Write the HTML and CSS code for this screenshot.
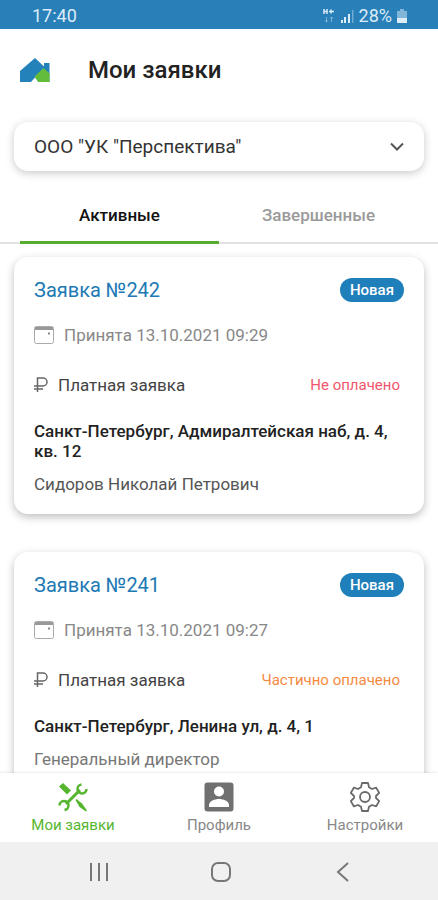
FILE: index.html
```html
<!DOCTYPE html>
<html lang="ru">
<head>
<meta charset="utf-8">
<meta name="viewport" content="width=device-width, initial-scale=1">
<title>Мои заявки</title>
<link rel="stylesheet" href="styles.css">
</head>
<body>
<div class="app">
  <div class="status-bar">
    <span>17:40</span>
    <div class="status-icons">
      <svg width="12" height="16" viewBox="0 0 12 16" fill="none" stroke="currentColor"><path d="M1 1v5M4 1v5M1 3.500h3M6 3.500h5M8 1.500v4" stroke-width="1.500"/><path d="M3.500 9v5M2 12.500l1.500 1.500L5 12.500M8.500 14V9M7 10.500L8.500 9l1.500 1.500" opacity=".45"/></svg>
      <svg width="14" height="14" viewBox="0 0 14 14" fill="currentColor"><path d="M1 11h2v3H1zM4 8h2v6H4zM8 5h2v9H8z"/><path d="M12 1h1.500v13H12z" opacity=".4"/></svg>
      <span>28%</span>
      <svg width="10" height="16" viewBox="0 0 10 16" fill="currentColor"><path d="M3 1h4v2h3v12H0V3h3z" opacity=".5"/><path d="M0 10h10v4a1 1 0 0 1-1 1H1a1 1 0 0 1-1-1z"/></svg>
    </div>
  </div>

  <header class="header">
    <svg class="logo" width="30" height="26" viewBox="0 0 30 26"><path fill="#2482bb" d="M0 25V14L15 1l9 8.500V6h5.500v19H0z"/><path fill="#64bd3a" d="M14.500 19.500L23.500 11l6 5.500V25H18z"/><path fill="#fff" d="M10.500 25.500l4.500-5 3.500 5z"/></svg>
    <h1 class="title">Мои заявки</h1>
  </header>

  <div class="company">
    <select class="company-select" aria-label="Управляющая компания">
      <option>ООО "УК "Перспектива"</option>
    </select>
    <svg class="chevron" width="16" height="10" viewBox="0 0 16 10" fill="none" stroke="#555" stroke-width="2"><path d="M2 1.500l6 6 6-6"/></svg>
  </div>

  <div class="tabs" role="tablist">
    <button class="tab tab-active" role="tab" aria-selected="true">Активные</button>
    <button class="tab" role="tab" aria-selected="false">Завершенные</button>
  </div>

  <main class="list">
    <article class="card">
      <div class="row">
        <h2 class="card-title">Заявка №242</h2>
        <span class="badge">Новая</span>
      </div>
      <div class="date">
        <svg width="20" height="20" viewBox="0 0 20 20" fill="none" stroke="#aaa"><rect x=".5" y="1.500" width="19" height="17" rx="2"/><path d="M1 3.500h18" stroke="#999" stroke-width="3"/><path d="M14 8.500h2" stroke="#888" stroke-width="2"/></svg>
        <span>Принята 13.10.2021 09:29</span>
      </div>
      <div class="row payment">
        <span class="paid">
          <svg width="14" height="16" viewBox="0 0 14 16" fill="none" stroke="#666" stroke-width="1.500"><path d="M3.500 15V1H9a4 4 0 0 1 0 8H0M0 12h9"/></svg>
          Платная заявка
        </span>
        <span class="state state-unpaid">Не оплачено</span>
      </div>
      <p class="address">Санкт-Петербург, Адмиралтейская наб, д. 4, кв. 12</p>
      <p class="person">Сидоров Николай Петрович</p>
    </article>

    <article class="card">
      <div class="row">
        <h2 class="card-title">Заявка №241</h2>
        <span class="badge">Новая</span>
      </div>
      <div class="date">
        <svg width="20" height="20" viewBox="0 0 20 20" fill="none" stroke="#aaa"><rect x=".5" y="1.500" width="19" height="17" rx="2"/><path d="M1 3.500h18" stroke="#999" stroke-width="3"/><path d="M14 8.500h2" stroke="#888" stroke-width="2"/></svg>
        <span>Принята 13.10.2021 09:27</span>
      </div>
      <div class="row payment">
        <span class="paid">
          <svg width="14" height="16" viewBox="0 0 14 16" fill="none" stroke="#666" stroke-width="1.500"><path d="M3.500 15V1H9a4 4 0 0 1 0 8H0M0 12h9"/></svg>
          Платная заявка
        </span>
        <span class="state state-partial">Частично оплачено</span>
      </div>
      <p class="address">Санкт-Петербург, Ленина ул, д. 4, 1</p>
      <p class="person person-muted">Генеральный директор</p>
    </article>
  </main>

  <nav class="nav">
    <a class="nav-item nav-active" href="#requests">
      <svg width="30" height="30" viewBox="0 0 30 30" fill="currentColor"><path d="M1 4.500L5 1l8 7.500L9 12.500z"/><path d="M17.500 18l1-1 5.500 4.500 5 7-1 1-6.500-4.500z"/><path d="M8 22L22 8" stroke="currentColor" stroke-width="3"/><path d="M23.500 2.500A4.500 4.500 0 1 0 28.500 7M6.500 28A4.500 4.500 0 1 0 1.500 23.500" fill="none" stroke="currentColor" stroke-width="2.500"/></svg>
      Мои заявки
    </a>
    <a class="nav-item" href="#profile">
      <svg width="30" height="30" viewBox="0 0 30 30"><rect x=".5" y=".5" width="29" height="29" rx="3" fill="#707070"/><circle cx="15" cy="9.500" r="5" fill="#fff"/><path d="M5 25v-2c0-4 6-6 10-6s10 2 10 6v2z" fill="#fff"/></svg>
      Профиль
    </a>
    <a class="nav-item" href="#settings">
      <svg width="30" height="30" viewBox="0 0 30 30" fill="none" stroke="#6a6a6a" stroke-width="1.800" stroke-linejoin="round"><path d="M12 1h6l1 4.200 3 1.800 4.200-1.300 3 5.200L26 14v2l3.200 3.100-3 5.200L22 23l-3 1.800L18 29h-6l-1-4.200L8 23l-4.200 1.300-3-5.200L4 16v-2L.8 10.900l3-5.200L8 7l3-1.800z"/><circle cx="15" cy="15" r="5"/></svg>
      Настройки
    </a>
  </nav>

  <div class="system-nav">
    <button class="system-button" aria-label="Недавние"><svg width="20" height="20" viewBox="0 0 20 20" stroke="#777" stroke-width="2"><path d="M2 1v18M10 1v18M18 1v18"/></svg></button>
    <button class="system-button" aria-label="Домой"><svg width="20" height="20" viewBox="0 0 20 20" fill="none" stroke="#777" stroke-width="2"><rect x="1" y="1" width="18" height="18" rx="6"/></svg></button>
    <button class="system-button" aria-label="Назад"><svg width="20" height="20" viewBox="0 0 20 20" fill="none" stroke="#777" stroke-width="2"><path d="M15 1L5 10l10 9"/></svg></button>
  </div>
</div>
</body>
</html>
```
FILE: styles.css
```css
* {
  box-sizing: border-box;
}

body {
  margin: 0;
  background: #fff;
  color: #222;
  font-family: Roboto, "Liberation Sans", sans-serif;
  font-size: 17px;
  line-height: 20px;
}

h1, h2, p {
  margin: 0;
}

button, select {
  border: 0;
  background: none;
  font: inherit;
}

svg {
  display: block;
  flex: none;
}

.app {
  display: flex;
  flex-direction: column;
  height: 100vh;
}

.status-bar {
  display: flex;
  flex: none;
  align-items: center;
  justify-content: space-between;
  padding: 6px 31px 3px 32px;
  background: #2980b9;
  color: #dcecf8;
  font-size: 18px;
}

.status-icons {
  display: flex;
  align-items: center;
  gap: 5px;
}

.header {
  display: flex;
  flex: none;
  align-items: center;
  gap: 38px;
  padding: 25px 20px 36px;
}

.title {
  font-size: 24px;
  font-weight: 500;
  line-height: 32px;
}

.company {
  position: relative;
  flex: none;
  margin: 0 14px;
  border-radius: 14px;
  background: #fff;
  box-shadow: 0 2px 8px rgba(0, 0, 0, 0.22);
}

.company-select {
  display: block;
  width: 100%;
  height: 49px;
  padding: 0 48px 0 20px;
  border-radius: 14px;
  appearance: none;
  color: #333;
  font-size: 19px;
}

.chevron {
  position: absolute;
  top: 20px;
  right: 19px;
  pointer-events: none;
}

.tabs {
  display: grid;
  flex: none;
  grid-template-columns: 1fr 1fr;
  margin-top: 18px;
  padding: 0 20px;
  box-shadow: inset 0 -2px #e2e2e2;
}

.tab {
  height: 55px;
  padding: 0;
  border-bottom: 3px solid transparent;
  color: #999;
  font-weight: 500;
}

.tab-active {
  border-color: #57ad2d;
  color: #111;
}

.list {
  display: flex;
  flex: 1;
  flex-direction: column;
  gap: 38px;
  min-height: 0;
  padding: 13px 14px;
  overflow: hidden;
}

.card {
  flex: none;
  padding: 20px;
  border-radius: 14px;
  background: #fff;
  box-shadow: 0 3px 9px rgba(0, 0, 0, 0.26);
}

.row {
  display: flex;
  align-items: center;
  justify-content: space-between;
}

.card-title {
  color: #2079b4;
  font-size: 20px;
  font-weight: 400;
  line-height: 26px;
}

.badge {
  padding: 2px 10px;
  border-radius: 12px;
  background: #1f7fba;
  color: #fff;
  font-size: 15px;
  font-weight: 500;
}

.date {
  display: flex;
  gap: 10px;
  margin-top: 22px;
  color: #888;
}

.payment {
  margin-top: 30px;
  padding-right: 4px;
}

.paid {
  display: flex;
  align-items: center;
  gap: 10px;
  color: #444;
}

.state {
  font-size: 15px;
}

.state-unpaid {
  color: #f0566c;
}

.state-partial {
  color: #f58a42;
}

.address {
  margin-top: 26px;
  font-weight: 500;
}

.person {
  margin-top: 13px;
  color: #555;
}

.person-muted {
  color: #777;
}

.nav {
  display: grid;
  flex: none;
  grid-template-columns: repeat(3, 1fr);
  padding: 9px 0 7px;
  background: #fff;
  box-shadow: 0 -1px 2px rgba(0, 0, 0, 0.08);
}

.nav-item {
  display: flex;
  flex-direction: column;
  align-items: center;
  gap: 3px;
  color: #888;
  font-size: 15px;
  text-decoration: none;
}

.nav-active {
  color: #55b52f;
}

.system-nav {
  display: flex;
  flex: none;
  justify-content: space-around;
  padding: 0 34px 0 38px;
  background: #f0f0f0;
}

.system-button {
  padding: 20px 16px 18px;
}
```
